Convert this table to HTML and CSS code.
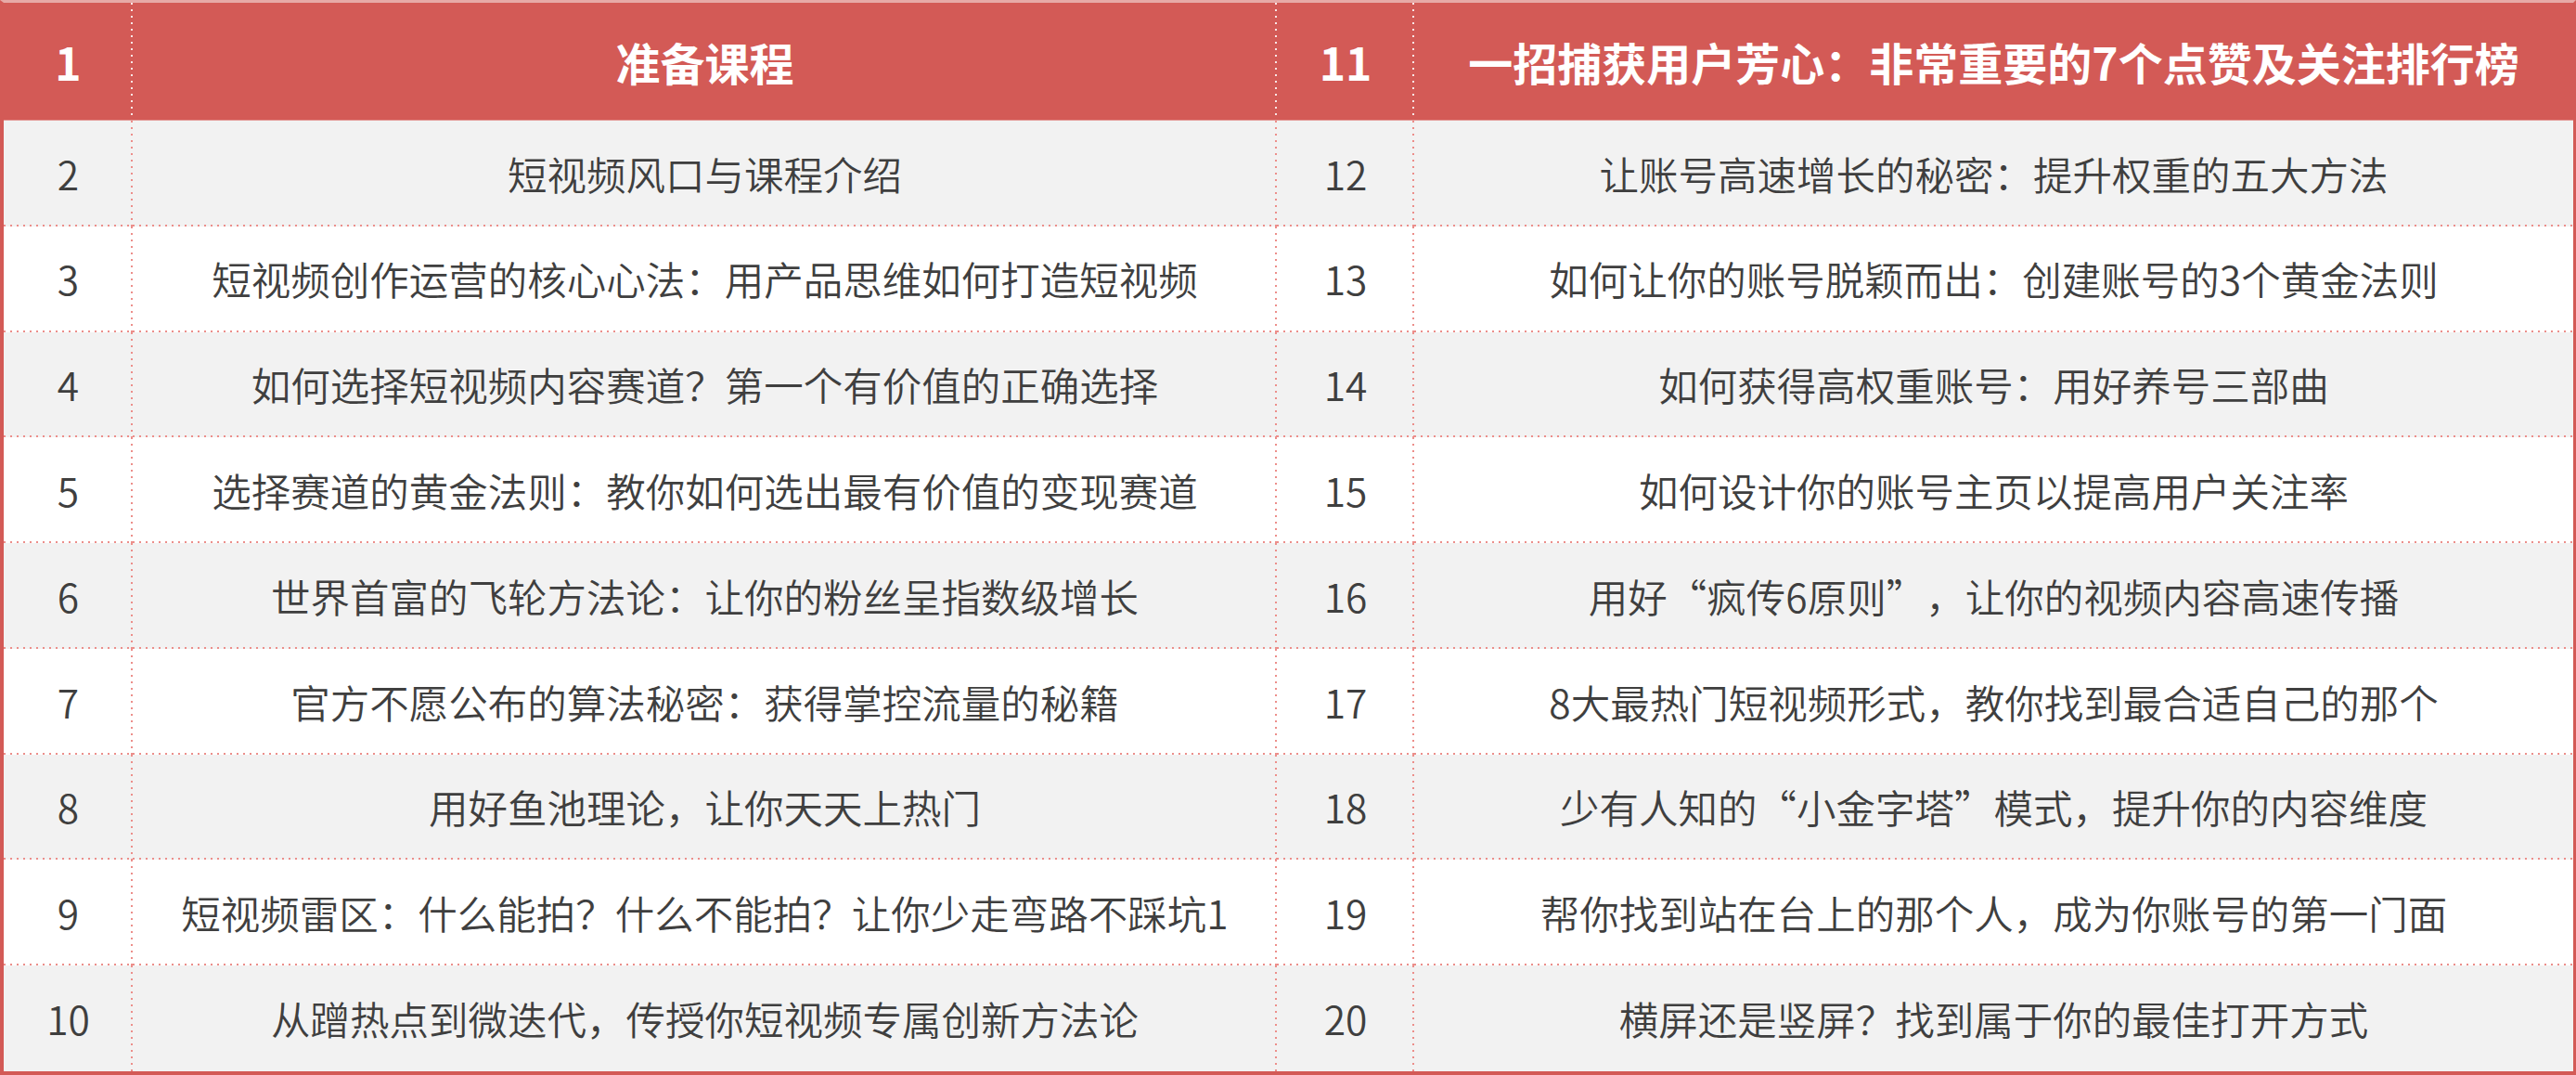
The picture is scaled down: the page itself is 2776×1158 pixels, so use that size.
FILE: index.html
```html
<!DOCTYPE html>
<html lang="zh-CN">
<head>
<meta charset="utf-8">
<title>课程目录</title>
<link rel="stylesheet" href="styles.css">
</head>
<body>
<div class="table">
  <div class="cell head num">1</div>
  <div class="cell head title">准备课程</div>
  <div class="cell head num">11</div>
  <div class="cell head title last-col">一招捕获用户芳心：非常重要的7个点赞及关注排行榜</div>

  <div class="cell gray num">2</div>
  <div class="cell gray title">短视频风口与课程介绍</div>
  <div class="cell gray num">12</div>
  <div class="cell gray title last-col">让账号高速增长的秘密：提升权重的五大方法</div>

  <div class="cell num">3</div>
  <div class="cell title">短视频创作运营的核心心法：用产品思维如何打造短视频</div>
  <div class="cell num">13</div>
  <div class="cell title last-col">如何让你的账号脱颖而出：创建账号的3个黄金法则</div>

  <div class="cell gray num">4</div>
  <div class="cell gray title">如何选择短视频内容赛道？第一个有价值的正确选择</div>
  <div class="cell gray num">14</div>
  <div class="cell gray title last-col">如何获得高权重账号：用好养号三部曲</div>

  <div class="cell num">5</div>
  <div class="cell title">选择赛道的黄金法则：教你如何选出最有价值的变现赛道</div>
  <div class="cell num">15</div>
  <div class="cell title last-col">如何设计你的账号主页以提高用户关注率</div>

  <div class="cell gray num">6</div>
  <div class="cell gray title">世界首富的飞轮方法论：让你的粉丝呈指数级增长</div>
  <div class="cell gray num">16</div>
  <div class="cell gray title last-col">用好<span class="q">“</span>疯传6原则<span class="q">”</span>，让你的视频内容高速传播</div>

  <div class="cell num">7</div>
  <div class="cell title">官方不愿公布的算法秘密：获得掌控流量的秘籍</div>
  <div class="cell num">17</div>
  <div class="cell title last-col">8大最热门短视频形式，教你找到最合适自己的那个</div>

  <div class="cell gray num">8</div>
  <div class="cell gray title">用好鱼池理论，让你天天上热门</div>
  <div class="cell gray num">18</div>
  <div class="cell gray title last-col">少有人知的<span class="q">“</span>小金字塔<span class="q">”</span>模式，提升你的内容维度</div>

  <div class="cell num">9</div>
  <div class="cell title">短视频雷区：什么能拍？什么不能拍？让你少走弯路不踩坑1</div>
  <div class="cell num">19</div>
  <div class="cell title last-col">帮你找到站在台上的那个人，成为你账号的第一门面</div>

  <div class="cell gray num last-row">10</div>
  <div class="cell gray title last-row">从蹭热点到微迭代，传授你短视频专属创新方法论</div>
  <div class="cell gray num last-row">20</div>
  <div class="cell gray title last-col last-row">横屏还是竖屏？找到属于你的最佳打开方式</div>
</div>
</body>
</html>
```

FILE: styles.css
```css
html, body {
  margin: 0;
  padding: 0;
  background: #ffffff;
}

body {
  font-family: "Noto Sans CJK SC", "Noto Sans", sans-serif;
}

.table {
  box-sizing: border-box;
  width: 2776px;
  height: 1158px;
  border-left: 4px solid #d35a56;
  border-right: 3px solid #d35a56;
  border-bottom: 4px solid #d35a56;
  border-top: 3px solid #e7aaa7;
  display: grid;
  grid-template-columns: 139px 1233px 148px 1fr;
  grid-template-rows: 127px repeat(9, 1fr);
}

.cell {
  --dot: #ec8e8a;
  display: flex;
  align-items: center;
  justify-content: center;
  color: #3f3f3f;
  font-size: 42.5px;
  font-weight: 350;
  line-height: 1;
  white-space: nowrap;
  background-color: #ffffff;
  background-image:
    linear-gradient(to bottom, var(--dot) 2px, transparent 2px),
    linear-gradient(to right, var(--dot) 2px, transparent 2px);
  background-size: 2px 7px, 7px 2px;
  background-repeat: repeat-y, repeat-x;
  background-position: right top, left bottom;
}

.q {
  display: inline-block;
  width: 1em;
  text-align: center;
}

.cell.gray {
  background-color: #f2f2f2;
}

.cell.last-col {
  background-image: linear-gradient(to right, var(--dot) 2px, transparent 2px);
  background-size: 7px 2px;
  background-repeat: repeat-x;
  background-position: left bottom;
}

.cell.last-row {
  background-image: linear-gradient(to bottom, var(--dot) 2px, transparent 2px);
  background-size: 2px 7px;
  background-repeat: repeat-y;
  background-position: right top;
}

.cell.last-row.last-col {
  background-image: none;
}

.cell.head {
  --dot: rgba(255, 255, 255, 0.85);
  background-color: #d35a56;
  color: #ffffff;
  font-weight: 700;
  font-size: 48px;
  border-bottom: 1px solid #e49b98;
  background-image: linear-gradient(to bottom, var(--dot) 2px, transparent 2px);
  background-size: 2px 7px;
  background-repeat: repeat-y;
  background-position: right top;
}

.cell.head.last-col {
  background-image: none;
}
```
